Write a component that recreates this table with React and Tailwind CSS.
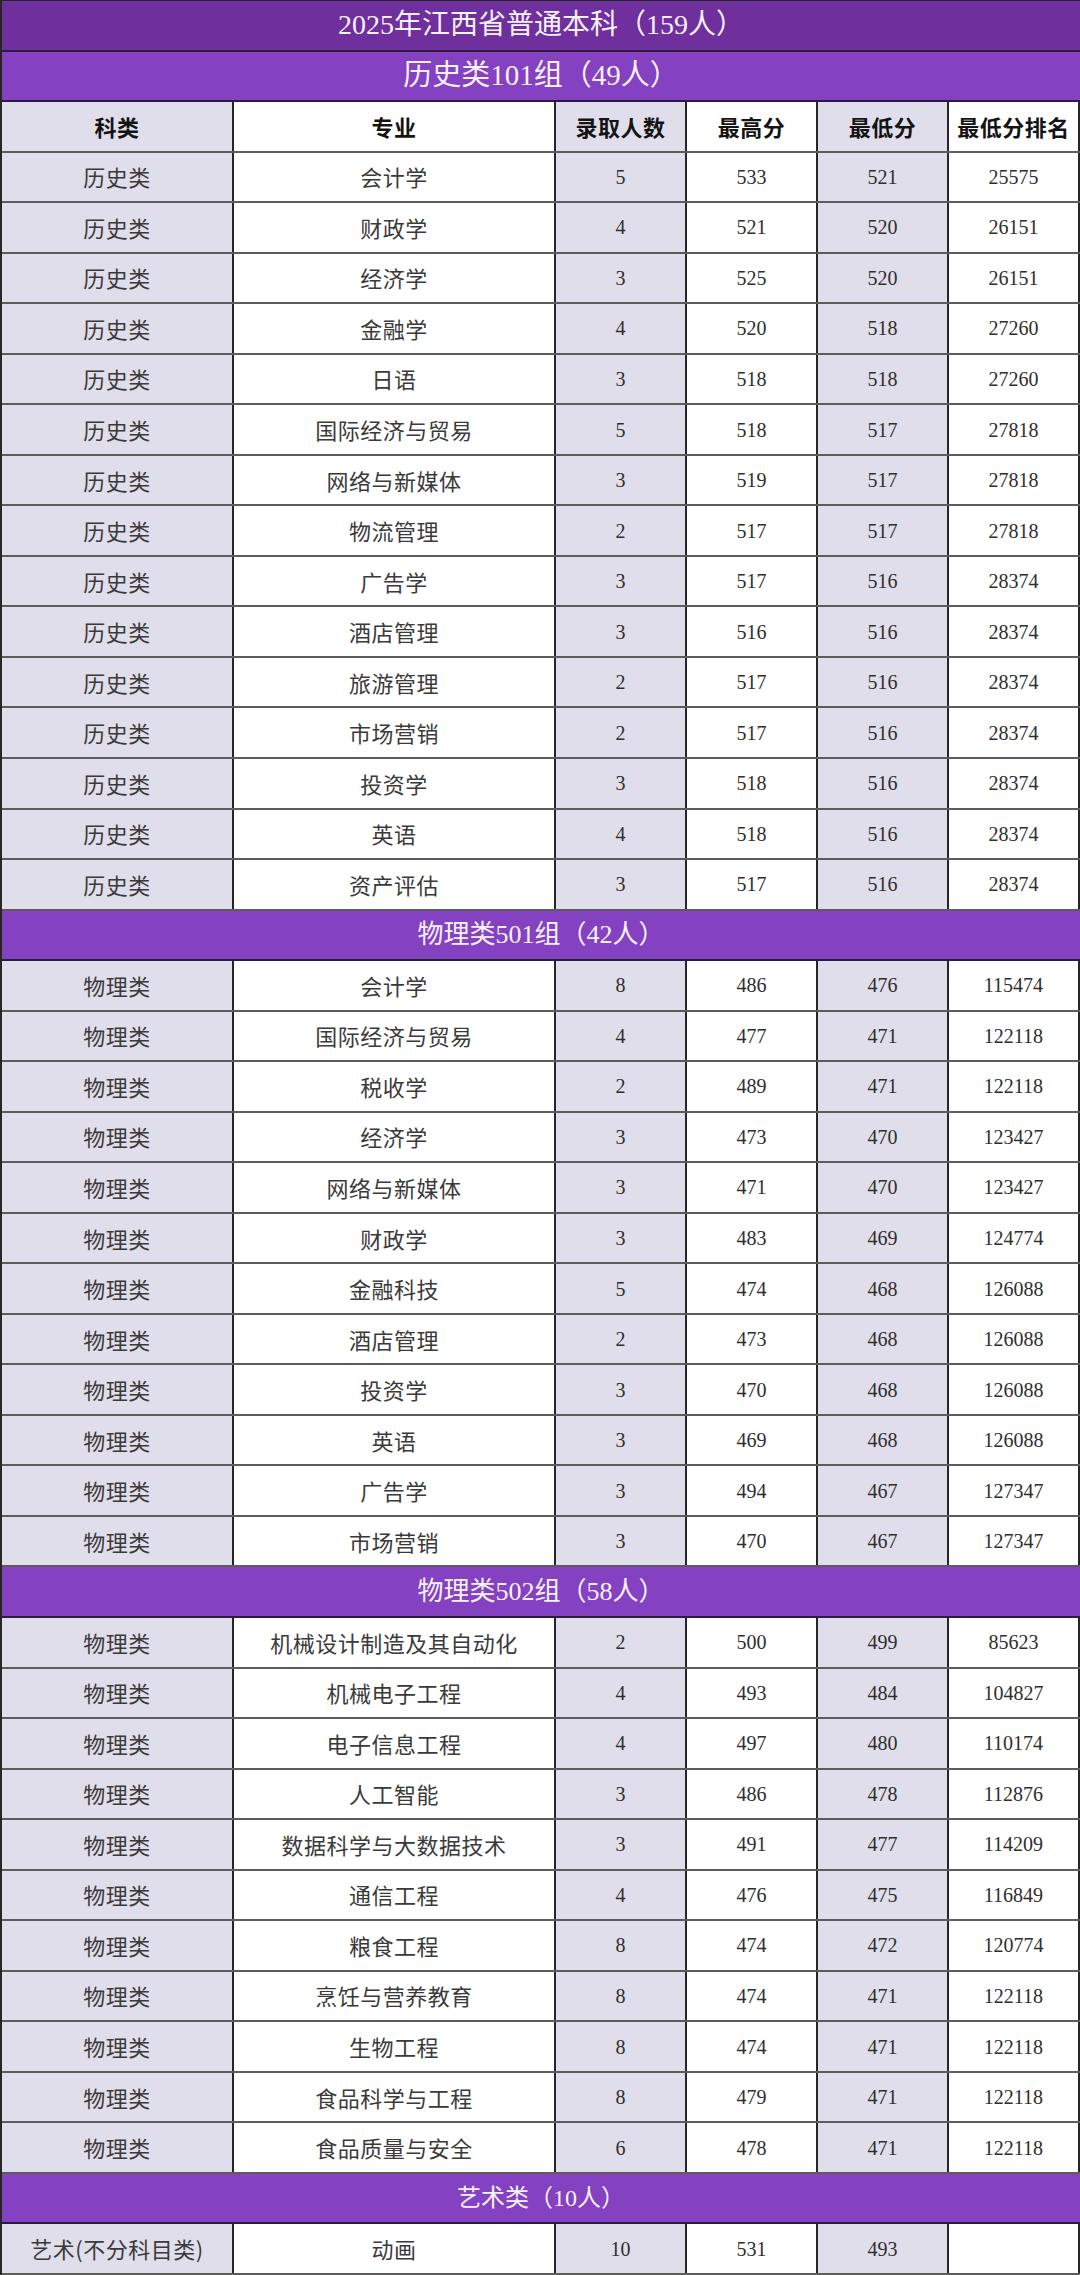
import React from "react";

const FONT = { fontFamily: "'Liberation Serif', 'Noto Sans CJK SC', serif" };
const SANS = { fontFamily: "'Noto Sans CJK SC', 'Noto Sans', sans-serif" };

const groups = [
  {
    title: "历史类101组（49人）",
    size: "text-[29px]",
    kind: "历史类",
    rows: [
      ["会计学", 5, 533, 521, 25575],
      ["财政学", 4, 521, 520, 26151],
      ["经济学", 3, 525, 520, 26151],
      ["金融学", 4, 520, 518, 27260],
      ["日语", 3, 518, 518, 27260],
      ["国际经济与贸易", 5, 518, 517, 27818],
      ["网络与新媒体", 3, 519, 517, 27818],
      ["物流管理", 2, 517, 517, 27818],
      ["广告学", 3, 517, 516, 28374],
      ["酒店管理", 3, 516, 516, 28374],
      ["旅游管理", 2, 517, 516, 28374],
      ["市场营销", 2, 517, 516, 28374],
      ["投资学", 3, 518, 516, 28374],
      ["英语", 4, 518, 516, 28374],
      ["资产评估", 3, 517, 516, 28374],
    ],
  },
  {
    title: "物理类501组（42人）",
    size: "text-[26px]",
    kind: "物理类",
    rows: [
      ["会计学", 8, 486, 476, 115474],
      ["国际经济与贸易", 4, 477, 471, 122118],
      ["税收学", 2, 489, 471, 122118],
      ["经济学", 3, 473, 470, 123427],
      ["网络与新媒体", 3, 471, 470, 123427],
      ["财政学", 3, 483, 469, 124774],
      ["金融科技", 5, 474, 468, 126088],
      ["酒店管理", 2, 473, 468, 126088],
      ["投资学", 3, 470, 468, 126088],
      ["英语", 3, 469, 468, 126088],
      ["广告学", 3, 494, 467, 127347],
      ["市场营销", 3, 470, 467, 127347],
    ],
  },
  {
    title: "物理类502组（58人）",
    size: "text-[26px]",
    kind: "物理类",
    rows: [
      ["机械设计制造及其自动化", 2, 500, 499, 85623],
      ["机械电子工程", 4, 493, 484, 104827],
      ["电子信息工程", 4, 497, 480, 110174],
      ["人工智能", 3, 486, 478, 112876],
      ["数据科学与大数据技术", 3, 491, 477, 114209],
      ["通信工程", 4, 476, 475, 116849],
      ["粮食工程", 8, 474, 472, 120774],
      ["烹饪与营养教育", 8, 474, 471, 122118],
      ["生物工程", 8, 474, 471, 122118],
      ["食品科学与工程", 8, 479, 471, 122118],
      ["食品质量与安全", 6, 478, 471, 122118],
    ],
  },
  {
    title: "艺术类（10人）",
    size: "text-[24px]",
    kind: "艺术(不分科目类)",
    rows: [["动画", 10, 531, 493, ""]],
  },
];

const GRID =
  "flex-1 min-h-0 grid grid-cols-[232px_322px_131px_131px_131px_131px] border-b-2 border-[#5c5c5c]";

function Cell({ shade, children, num }) {
  return (
    <div
      className={
        "flex items-center justify-center border-r-2 border-[#262626] overflow-hidden whitespace-nowrap " +
        (shade ? "bg-[#e1deeb]" : "bg-white")
      }
    >
      {num ? (
        <span className="text-[20px] text-[#2e2e2e]" style={FONT}>
          {children}
        </span>
      ) : (
        <span className="text-[22px] tracking-[0.5px] text-[#3a3a3a]" style={SANS}>
          {children}
        </span>
      )}
    </div>
  );
}

function HeadCell({ shade, children }) {
  return (
    <div
      className={
        "flex items-center justify-center border-r-2 border-[#262626] whitespace-nowrap " +
        (shade ? "bg-[#e1deeb]" : "bg-white")
      }
    >
      <span className="text-[22px] font-bold tracking-[0.5px] text-[#141414]" style={SANS}>
        {children}
      </span>
    </div>
  );
}

function Band({ children, dark, size }) {
  return (
    <div
      className={
        "flex-1 min-h-0 flex items-center justify-center border-b-2 border-[#2d1a40] " +
        (dark ? "bg-[#6f2f9d]" : "bg-[#8441c1]")
      }
    >
      <span className={size + " text-[#f7f1fb] leading-none"} style={FONT}>
        {children}
      </span>
    </div>
  );
}

export default function App() {
  return (
    <div className="w-[1080px] h-[2275px] flex flex-col border-l-2 border-t border-[#262626] bg-white">
      <Band dark size="text-[28px]">
        2025年江西省普通本科（159人）
      </Band>
      {groups.map((g, gi) => (
        <React.Fragment key={gi}>
          <Band size={g.size}>{g.title}</Band>
          {gi === 0 && (
            <div className={GRID}>
              <HeadCell shade>科类</HeadCell>
              <HeadCell>专业</HeadCell>
              <HeadCell shade>录取人数</HeadCell>
              <HeadCell>最高分</HeadCell>
              <HeadCell shade>最低分</HeadCell>
              <HeadCell>最低分排名</HeadCell>
            </div>
          )}
          {g.rows.map((r, ri) => (
            <div key={ri} className={GRID}>
              <Cell shade>{g.kind}</Cell>
              <Cell>{r[0]}</Cell>
              <Cell shade num>{r[1]}</Cell>
              <Cell num>{r[2]}</Cell>
              <Cell shade num>{r[3]}</Cell>
              <Cell num>{r[4]}</Cell>
            </div>
          ))}
        </React.Fragment>
      ))}
    </div>
  );
}
